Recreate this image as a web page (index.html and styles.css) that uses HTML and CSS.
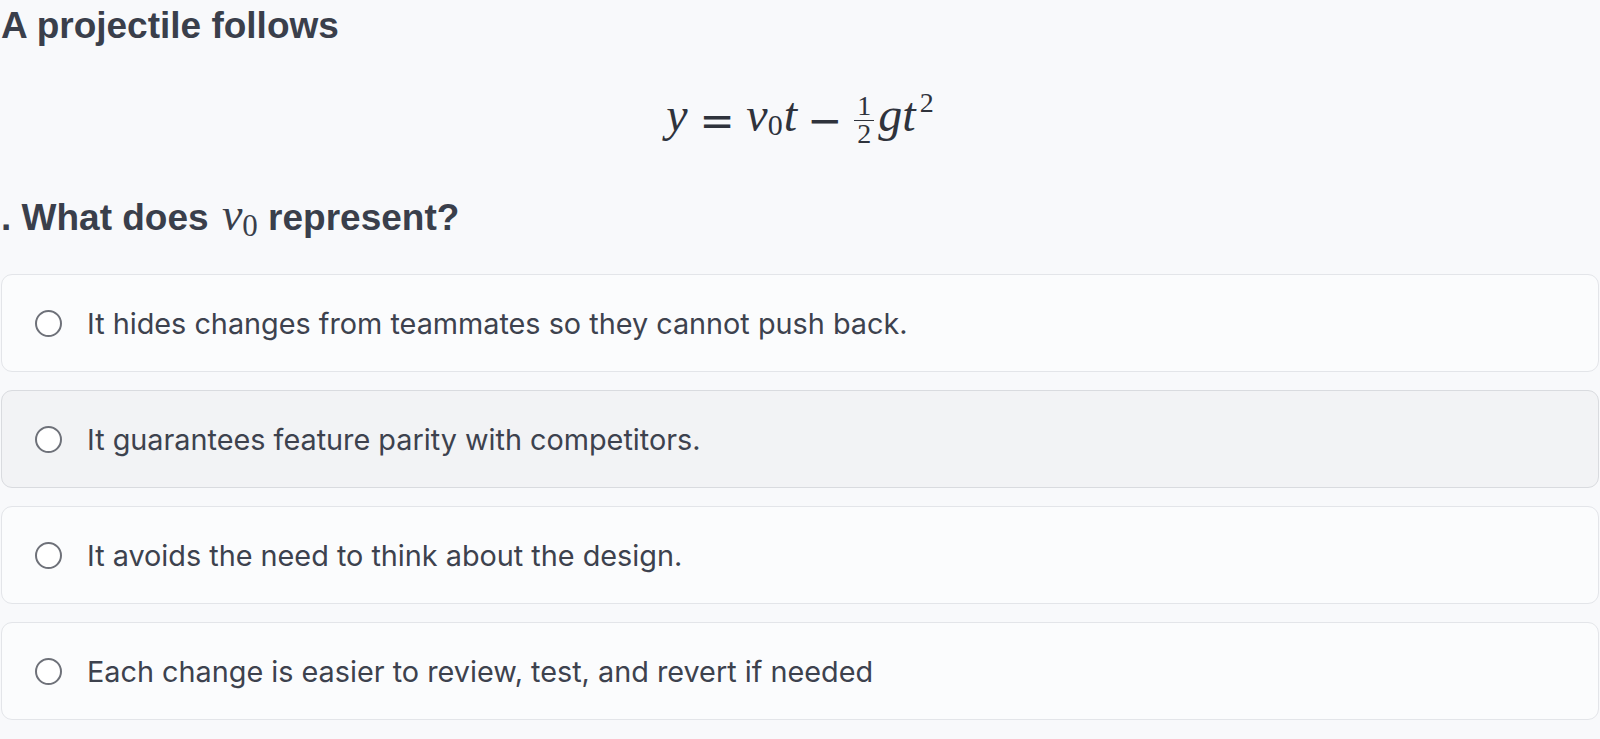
FILE: index.html
```html
<!DOCTYPE html>
<html lang="en">
<head>
  <meta charset="UTF-8" />
  <meta name="viewport" content="width=device-width, initial-scale=1.0"/>
  <title>Question</title>
  <link rel="stylesheet" href="styles.css">
</head>
<body>
  <div class="question">
    <h2 class="prompt">A projectile follows</h2>

    <div class="math-display">
      <span class="mi">y</span><span class="mo rel">=</span><span class="mi">v</span><span class="msub">0</span><span class="mi">t</span><span class="mo bin">&minus;</span><span class="frac"><span class="num">1</span><span class="den">2</span></span><span class="mi">g</span><span class="mi">t</span><span class="msup">2</span>
    </div>

    <h2 class="prompt">. What does <span class="math-inline"><span class="mi">v</span><span class="msub">0</span></span> represent?</h2>

    <div class="options">
      <label class="option">
        <input type="radio" name="answer" value="a">
        <span>It hides changes from teammates so they cannot push back.</span>
      </label>
      <label class="option hovered">
        <input type="radio" name="answer" value="b">
        <span>It guarantees feature parity with competitors.</span>
      </label>
      <label class="option">
        <input type="radio" name="answer" value="c">
        <span>It avoids the need to think about the design.</span>
      </label>
      <label class="option">
        <input type="radio" name="answer" value="d">
        <span>Each change is easier to review, test, and revert if needed</span>
      </label>
    </div>
  </div>
</body>
</html>
```

FILE: styles.css
```css
body {
  margin: 0;
  padding: 0 1px;
  background-color: #f8f9fb;
  color: #3a3f4b;
  font-family: "Liberation Sans", Arial, sans-serif;
}

.prompt {
  margin: 0;
  font-size: 37px;
  line-height: 52px;
  font-weight: 700;
  color: #3a3f4b;
}

/* === Math === */
.math-display {
  height: 140px;
  box-sizing: border-box;
  padding-top: 37px;
  text-align: center;
  font-family: "Liberation Serif", "Times New Roman", serif;
  font-size: 48px;
  line-height: 46px;
  color: #2f333c;
  white-space: nowrap;
}

.mi {
  font-style: italic;
}

.mo {
  font-family: "DejaVu Sans", sans-serif;
  font-size: 42px;
  vertical-align: -4px;
}

.mo.rel {
  margin: 0 0.28em;
}

.mo.bin {
  margin: 0 0.24em;
}

.msub {
  font-size: 30px;
  vertical-align: -4px;
  line-height: 1;
  margin-right: 1px;
}

.msup {
  font-size: 28px;
  vertical-align: 19px;
  line-height: 1;
  margin-left: 4px;
}

.frac {
  display: inline-flex;
  flex-direction: column;
  align-items: center;
  font-size: 28px;
  line-height: 28px;
  vertical-align: 16px;
  margin: 0 4px 0 2px;
}

.frac .num {
  padding: 0 3px;
  border-bottom: 1.5px solid #2f333c;
}

.frac .den {
  line-height: 25px;
}

.math-inline {
  font-family: "Liberation Serif", "Times New Roman", serif;
  font-weight: 400;
  font-size: 46px;
  line-height: 1;
  margin-left: 3px;
}

.math-inline .msub {
  font-size: 31px;
  vertical-align: -6px;
  margin-right: 0;
}

/* === Options === */
.options {
  margin-top: 30px;
  display: flex;
  flex-direction: column;
  gap: 18px;
}

.option {
  display: flex;
  align-items: center;
  gap: 25px;
  height: 98px;
  box-sizing: border-box;
  padding: 0 33px;
  background-color: #fbfcfd;
  border: 1px solid #e3e5e9;
  border-radius: 11px;
  font-family: Inter, "Liberation Sans", sans-serif;
  font-size: 28.8px;
  color: #3d424e;
  cursor: pointer;
}

.option.hovered,
.option:hover {
  background-color: #f2f3f5;
  border-color: #d9dbdf;
}

.option input {
  appearance: none;
  margin: 0;
  width: 27px;
  height: 27px;
  flex-shrink: 0;
  border: 2px solid #6e7179;
  border-radius: 50%;
  background-color: #fff;
}
```
